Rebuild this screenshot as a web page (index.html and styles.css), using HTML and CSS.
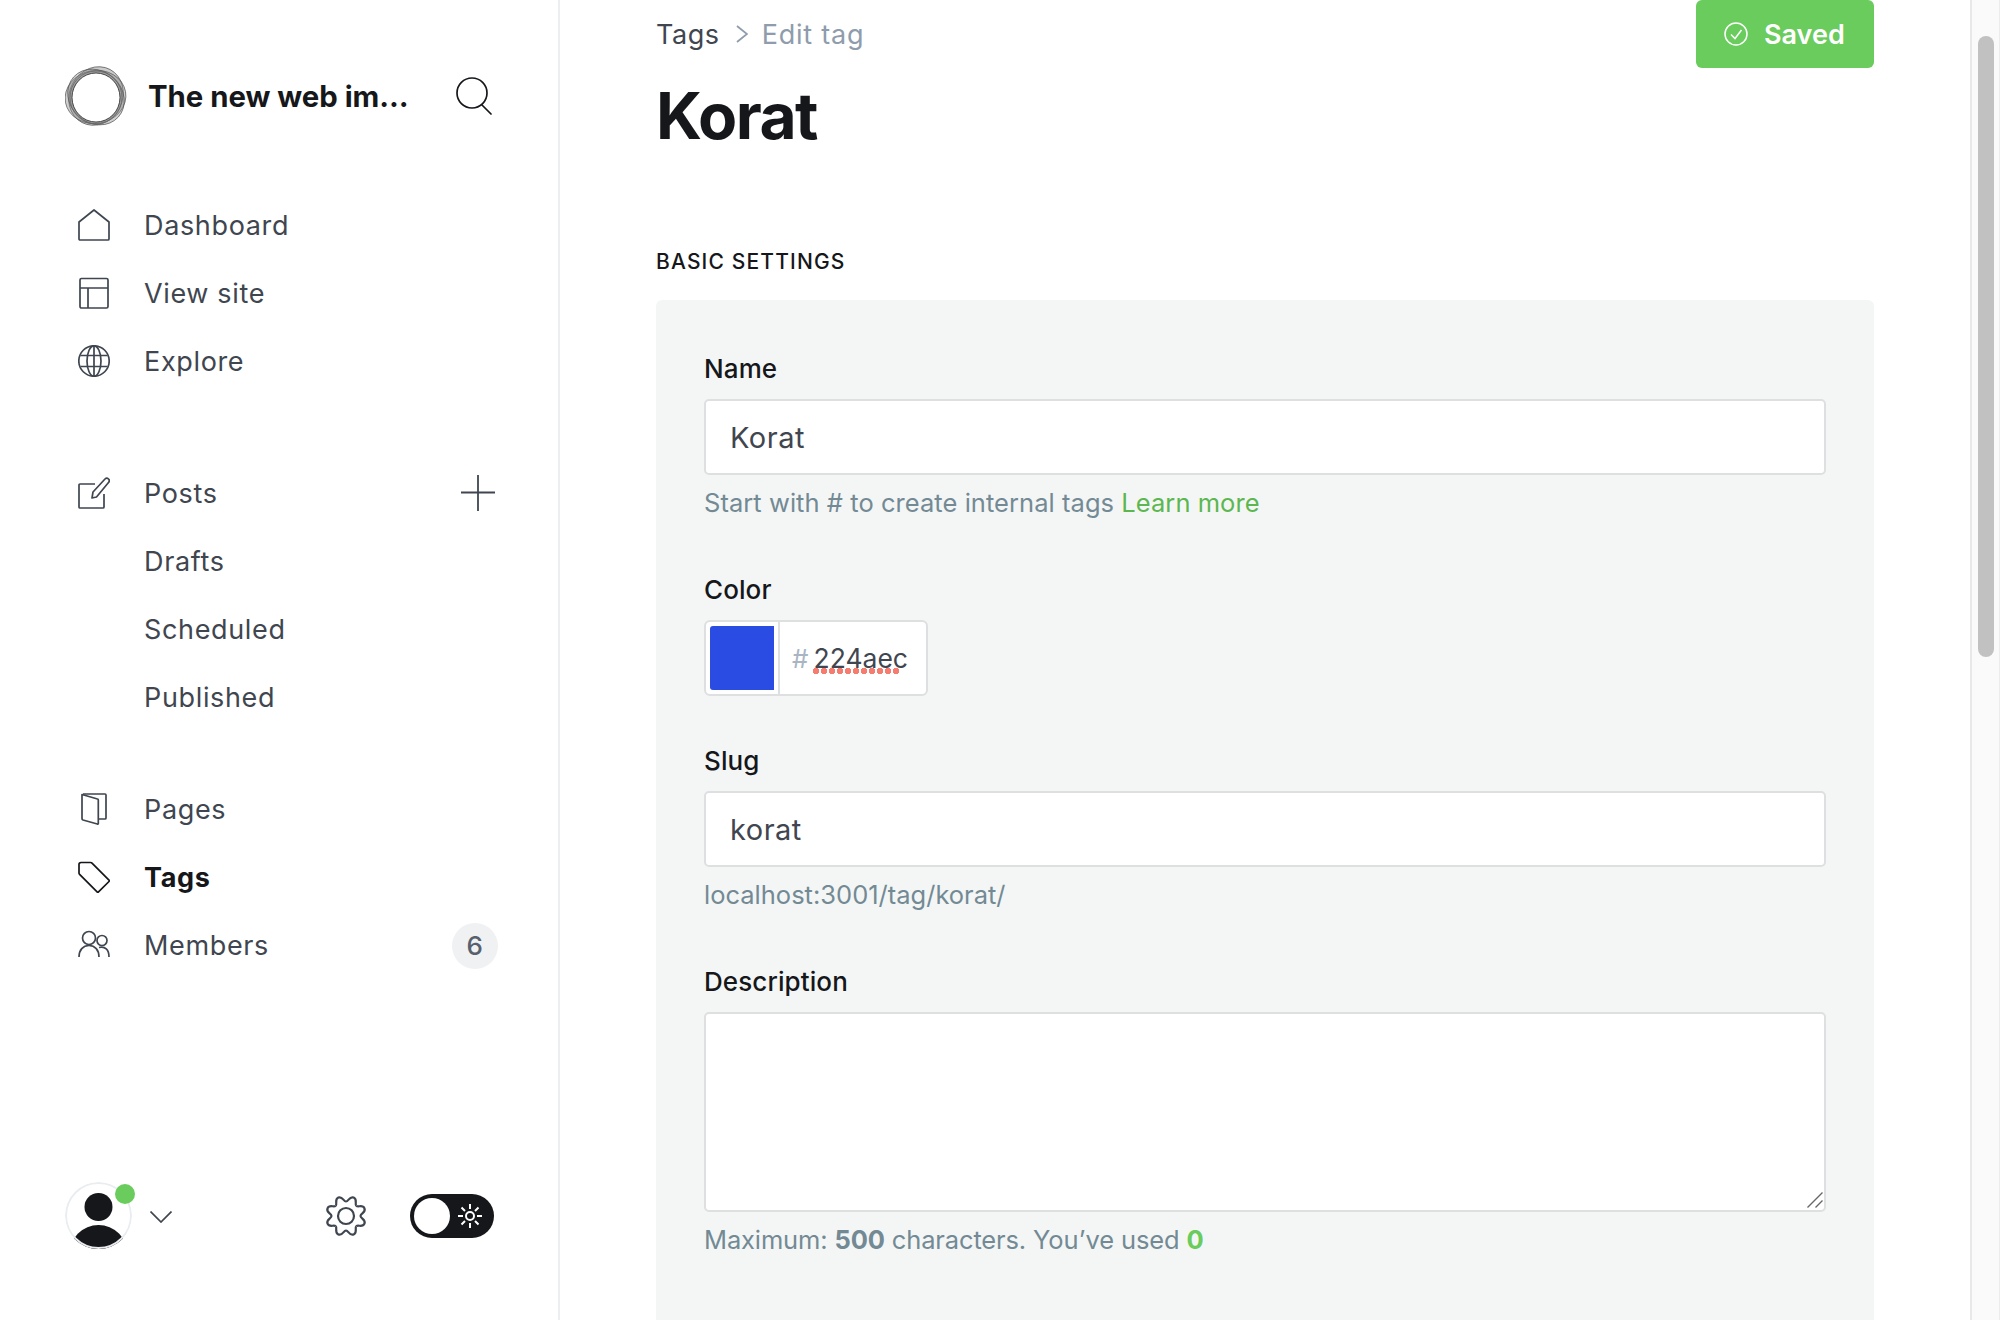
FILE: index.html
```html
<!DOCTYPE html>
<html lang="en">

<head>
  <meta charset="UTF-8">
  <title>Edit tag</title>
  <link rel="stylesheet" href="styles.css">
</head>

<body>
  <aside class="sidebar">
    <div class="brand">
      <svg class="logo" viewBox="0 0 62 64" stroke="#555" stroke-width=".7">
        <ellipse cx="31" cy="32" rx="30" ry="26.500" transform="rotate(-62 31 32)" fill="#aaa" fill-opacity=".6"/>
        <ellipse cx="30.500" cy="33" rx="30.500" ry="26.500" transform="rotate(-10 30.500 33)" fill="#888" fill-opacity=".4"/>
        <ellipse cx="31" cy="33" rx="30" ry="26" transform="rotate(42 31 33)" fill="#888" fill-opacity=".4"/>
        <ellipse cx="31" cy="33.500" rx="26" ry="26.500" fill="none" stroke="#666" stroke-width=".8"/>
        <ellipse cx="31" cy="33.500" rx="24" ry="24.500" fill="#fff" stroke="#333" stroke-width=".9"/>
      </svg>
      <span class="brand-title">The new web im…</span>
      <svg class="search" viewBox="0 0 36 38" fill="none" stroke="#15171a" stroke-width="1.7" stroke-linecap="round">
        <circle cx="16" cy="16" r="15"/>
        <path d="M26 28l9 9"/>
      </svg>
    </div>

    <nav class="nav-group">
      <a class="nav-item">
        <svg class="nav-icon" viewBox="0 0 32 32"><path d="M1 13L16 1l15 12v17a1 1 0 0 1-1 1H2a1 1 0 0 1-1-1z"/></svg>
        Dashboard
      </a>
      <a class="nav-item">
        <svg class="nav-icon" viewBox="0 0 32 32"><rect x="2" y="1.500" width="28" height="29.500" rx="1.500"/><path d="M2 11h28M10 11v20"/></svg>
        View site
      </a>
      <a class="nav-item">
        <svg class="nav-icon" viewBox="0 0 32 32"><circle cx="16" cy="16" r="15.200"/><ellipse cx="16" cy="16" rx="7" ry="15.200"/><path d="M16 1v30M2.500 10.500h27M2.500 21.500h27"/></svg>
        Explore
      </a>
    </nav>

    <nav class="nav-group posts-group">
      <a class="nav-item">
        <svg class="nav-icon" viewBox="0 0 32 32"><path d="M17 7H2a1 1 0 0 0-1 1v22a1 1 0 0 0 1 1h23a1 1 0 0 0 1-1V17"/><path d="M14 21l1-6L27 2a2.500 2.500 0 0 1 3.500 0c1 1 1 2.500 0 3.500L18.500 20z"/></svg>
        Posts
        <svg class="plus" viewBox="0 0 34 36"><path d="M0 17.500h34M17 0v36"/></svg>
      </a>
      <a class="nav-item sub">Drafts</a>
      <a class="nav-item sub">Scheduled</a>
      <a class="nav-item sub">Published</a>
    </nav>

    <nav class="nav-group">
      <a class="nav-item">
        <svg class="nav-icon" viewBox="0 0 32 32"><path d="M5 1h22a1 1 0 0 1 1 1v23a1 1 0 0 1-1 1h-6"/><path d="M4 1.500l15.500 4.500a1 1 0 0 1 .8 1v23.500a.7.7 0 0 1-1 .5L5 27a1.500 1.500 0 0 1-1-1.500z"/></svg>
        Pages
      </a>
      <a class="nav-item active">
        <svg class="nav-icon" viewBox="0 0 32 32"><path d="M3 1.500h9.500a2 2 0 0 1 1.500.6l17 17a1 1 0 0 1 0 1.400L20.500 30.800a1 1 0 0 1-1.400 0L1.600 13.300a2 2 0 0 1-.6-1.500V3.500a2 2 0 0 1 2-2z"/></svg>
        Tags
      </a>
      <a class="nav-item">
        <svg class="nav-icon" viewBox="0 0 32 32"><circle cx="11" cy="9" r="6.500"/><path d="M1 28c0-7 4-11.500 10-11.500S21 21 21 28"/><circle cx="24" cy="11.500" r="5"/><path d="M21 18.500c6-1.500 10 2 10 9.500"/></svg>
        Members
        <span class="badge">6</span>
      </a>
    </nav>

    <div class="sidebar-foot">
      <div class="avatar">
        <svg viewBox="0 0 67 67">
          <circle cx="33.500" cy="25" r="14"/>
          <circle cx="33.500" cy="72" r="29"/>
          <circle class="avatar-ring" cx="33.500" cy="33.500" r="32.500"/>
        </svg>
        <span class="status-dot"></span>
      </div>
      <svg class="chevron" viewBox="0 0 22 12"><path d="M.5 .5L11 11 21.500 .5"/></svg>
      <svg class="gear" viewBox="-21 -21 42 42">
        <circle r="8"/>
        <g>
          <path transform="rotate(22.500)" d="M-5.550-13.400C-3.240-14.360-4.500-20 0-20S3.240-14.360 5.550-13.400"/>
          <path transform="rotate(67.500)" d="M-5.550-13.400C-3.240-14.360-4.500-20 0-20S3.240-14.360 5.550-13.400"/>
          <path transform="rotate(112.500)" d="M-5.550-13.400C-3.240-14.360-4.500-20 0-20S3.240-14.360 5.550-13.400"/>
          <path transform="rotate(157.500)" d="M-5.550-13.400C-3.240-14.360-4.500-20 0-20S3.240-14.360 5.550-13.400"/>
          <path transform="rotate(202.500)" d="M-5.550-13.400C-3.240-14.360-4.500-20 0-20S3.240-14.360 5.550-13.400"/>
          <path transform="rotate(247.500)" d="M-5.550-13.400C-3.240-14.360-4.500-20 0-20S3.240-14.360 5.550-13.400"/>
          <path transform="rotate(292.500)" d="M-5.550-13.400C-3.240-14.360-4.500-20 0-20S3.240-14.360 5.550-13.400"/>
          <path transform="rotate(337.500)" d="M-5.550-13.400C-3.240-14.360-4.500-20 0-20S3.240-14.360 5.550-13.400"/>
        </g>
      </svg>
      <div class="theme-toggle">
        <span class="knob"></span>
        <svg class="sun" viewBox="0 0 24 24"><circle cx="12" cy="12" r="4"/><path d="M12 0v5M12 19v5M0 12h5M19 12h5M3.500 3.500L7 7M17 17l3.500 3.500M20.500 3.500L17 7M7 17l-3.500 3.500"/></svg>
      </div>
    </div>
  </aside>

  <main class="content">
    <header class="page-head">
      <div>
        <div class="breadcrumb">
          <span>Tags</span>
          <svg viewBox="0 0 12 18"><path d="M1 1l10 8-10 8"/></svg>
          <span class="crumb-current">Edit tag</span>
        </div>
        <h1>Korat</h1>
      </div>
      <button class="saved-btn">
        <svg viewBox="0 0 24 24"><circle cx="12" cy="12" r="11"/><path d="M7 12.500l4 4 6.500-8.500"/></svg>
        Saved
      </button>
    </header>

    <h2 class="section-title">BASIC SETTINGS</h2>

    <form class="panel">
      <label class="field-label">Name</label>
      <input class="text-input" type="text" value="Korat" spellcheck="false">
      <p class="hint hint-tags">Start with # to create internal tags <a>Learn more</a></p>

      <label class="field-label color-label">Color</label>
      <div class="color-field">
        <span class="swatch"></span>
        <span class="hex"><span class="hash">#</span><span class="misspelt">224aec</span></span>
      </div>

      <label class="field-label slug-label">Slug</label>
      <input class="text-input" type="text" value="korat" spellcheck="false">
      <p class="hint">localhost:3001/tag/korat/</p>

      <label class="field-label desc-label">Description</label>
      <div class="textarea-wrap">
        <textarea class="text-area" spellcheck="false"></textarea>
        <svg class="grip" viewBox="0 0 16 16"><path d="M.5 15.500l15-15M8.500 15.500l7-7"/></svg>
      </div>
      <p class="hint hint-max">Maximum: <b>500</b> characters. You’ve used <b class="used">0</b></p>
    </form>
  </main>

  <div class="scrollbar"><div class="thumb"></div></div>
</body>

</html>
```

FILE: styles.css
```css
* {
  box-sizing: border-box;
}

body {
  margin: 0;
  height: 1320px;
  display: flex;
  overflow: hidden;
  font-family: Inter, sans-serif;
  background-color: #fff;
  color: #15171a;
}

/* sidebar */
.sidebar {
  width: 560px;
  flex: none;
  display: flex;
  flex-direction: column;
  border-right: 2px solid #eceef0;
  padding: 64px 64px 0 65px;
}

.brand {
  display: flex;
  align-items: center;
  height: 64px;
  margin-bottom: 63px;
}

.logo {
  width: 62px;
  height: 64px;
  flex: none;
}

.brand-title {
  margin-left: 21px;
  font-size: 29.300px;
  font-weight: 700;
  white-space: nowrap;
}

.search {
  width: 36px;
  height: 38px;
  margin-left: auto;
  margin-right: 2px;
  flex: none;
}

.nav-group {
  display: flex;
  flex-direction: column;
  margin-bottom: 64px;
}

.posts-group {
  margin-bottom: 44px;
}

.nav-item {
  display: flex;
  align-items: center;
  height: 68px;
  padding-left: 13px;
  font-size: 27px;
  letter-spacing: .65px;
  color: #3f4650;
}

.nav-item.sub {
  padding-left: 79px;
}

.nav-item.active {
  font-weight: 700;
  color: #15171a;
}

.nav-icon {
  width: 32px;
  height: 32px;
  margin-right: 34px;
  flex: none;
  fill: none;
  stroke: #3f4650;
  stroke-width: 1.7;
  stroke-linejoin: round;
}

.nav-item.active .nav-icon {
  stroke: #15171a;
}

.plus {
  width: 34px;
  height: 36px;
  margin-left: auto;
  margin-right: -1px;
  fill: none;
  stroke: #3f4650;
  stroke-width: 1.8;
}

.badge {
  width: 46px;
  height: 46px;
  margin-left: auto;
  margin-right: -4px;
  margin-top: 1px;
  display: flex;
  align-items: center;
  justify-content: center;
  border-radius: 50%;
  background-color: #eff1f3;
  color: #56616d;
  font-size: 26px;
  font-weight: 500;
}

.sidebar-foot {
  display: flex;
  align-items: center;
  margin-top: auto;
  margin-bottom: 71px;
  height: 67px;
}

.avatar {
  position: relative;
  width: 67px;
  height: 67px;
  flex: none;
  border-radius: 50%;
}

.avatar svg {
  width: 67px;
  height: 67px;
  display: block;
  border-radius: 50%;
  fill: #15171a;
}

.avatar-ring {
  fill: none;
  stroke: #eaedf0;
  stroke-width: 2;
}

.status-dot {
  position: absolute;
  top: 2px;
  right: -3px;
  width: 20px;
  height: 20px;
  border-radius: 50%;
  background-color: #69cc5c;
}

.chevron {
  width: 22px;
  height: 12px;
  margin-left: 18px;
  margin-top: 2px;
  fill: none;
  stroke: #3f4650;
  stroke-width: 1.7;
}

.gear {
  width: 42px;
  height: 42px;
  margin-left: auto;
  fill: none;
  stroke: #3f4650;
  stroke-width: 2.2;
}

.theme-toggle {
  width: 84px;
  height: 44px;
  margin-left: 43px;
  padding: 4px;
  display: flex;
  align-items: center;
  justify-content: space-between;
  border-radius: 22px;
  background-color: #15171a;
}

.knob {
  width: 36px;
  height: 36px;
  border-radius: 50%;
  background-color: #fff;
}

.sun {
  width: 24px;
  height: 24px;
  margin-right: 8px;
  fill: none;
  stroke: #fff;
  stroke-width: 2;
}

/* main column */
.content {
  flex: 1;
  min-width: 0;
  padding: 0 96px;
}

.page-head {
  display: flex;
  justify-content: space-between;
  align-items: flex-start;
  height: 240px;
}

.breadcrumb {
  display: flex;
  align-items: center;
  gap: 16px;
  height: 68px;
  font-size: 27px;
  letter-spacing: .55px;
  color: #3f4650;
}

.breadcrumb svg {
  width: 12px;
  height: 18px;
  fill: none;
  stroke: #8e9cac;
  stroke-width: 1.8;
}

.crumb-current {
  margin-left: -2px;
  letter-spacing: .8px;
  color: #8e9cac;
}

h1 {
  margin: 12px 0 0;
  font-size: 64px;
  line-height: 72px;
  font-weight: 700;
  letter-spacing: -1.5px;
}

.saved-btn {
  display: flex;
  align-items: center;
  gap: 16px;
  width: 178px;
  height: 68px;
  padding: 0 0 0 28px;
  border: none;
  border-radius: 6px;
  background-color: #69cc5c;
  color: #fff;
  font-family: inherit;
  font-size: 27px;
  font-weight: 600;
}

.saved-btn svg {
  width: 24px;
  height: 24px;
  fill: none;
  stroke: #fff;
  stroke-width: 1.5;
}

.section-title {
  margin: 0;
  height: 60px;
  padding-top: 6px;
  font-size: 21px;
  line-height: 32px;
  font-weight: 500;
  letter-spacing: 1.15px;
}

.panel {
  height: 1020px;
  padding: 48px 48px 0;
  border-radius: 6px 6px 0 0;
  background-color: #f4f6f6;
}

.field-label {
  display: block;
  height: 34px;
  margin-top: 4px;
  margin-bottom: 13px;
  font-size: 26px;
  line-height: 34px;
  font-weight: 500;
  letter-spacing: .1px;
}

.color-label {
  margin-top: 53px;
}

.slug-label {
  margin-top: 48px;
}

.desc-label {
  margin-top: 53px;
}

.text-input {
  display: block;
  width: 100%;
  height: 76px;
  padding: 0 24px;
  border: 2px solid #dddfe0;
  border-radius: 5px;
  background-color: #fff;
  color: #3f4650;
  font-family: inherit;
  font-size: 29px;
  letter-spacing: .5px;
}

.hint {
  margin: 11px 0 0;
  font-size: 25.500px;
  line-height: 34px;
  color: #738a94;
}

.hint-tags {
  letter-spacing: .05px;
}

.hint-max {
  letter-spacing: -.14px;
}

.hint a {
  color: #5cb74f;
}

.hint b {
  font-weight: 700;
}

.hint .used {
  color: #69cc5c;
}

.color-field {
  display: flex;
  width: 224px;
  height: 76px;
  border: 2px solid #dddfe0;
  border-radius: 6px;
  background-color: #fff;
}

.swatch {
  width: 64px;
  margin: 4px 0 4px 4px;
  border-radius: 3px 0 0 3px;
  background-color: #2a4ce2;
  flex: none;
}

.hex {
  flex: 1;
  display: flex;
  align-items: center;
  padding: 0 0 0 12px;
  margin-left: 4px;
  border-left: 2px solid #dddfe0;
  font-size: 26.500px;
  color: #3f4650;
}

.hash {
  margin-right: 5px;
  font-size: 26px;
  color: #a9b5c2;
}

.misspelt {
  position: relative;
}

.misspelt::after {
  content: "";
  position: absolute;
  left: -1px;
  bottom: 0;
  width: 88px;
  height: 6px;
  background-image: radial-gradient(circle, #f47c70 3px, transparent 3.4px);
  background-size: 8px 6px;
  background-repeat: repeat-x;
}

.textarea-wrap {
  position: relative;
}

.text-area {
  display: block;
  width: 100%;
  height: 200px;
  border: 2px solid #dddfe0;
  border-radius: 5px;
  background-color: #fff;
  resize: none;
}

.grip {
  position: absolute;
  right: 3px;
  bottom: 4px;
  width: 16px;
  height: 16px;
  fill: none;
  stroke: #666;
  stroke-width: 1.4;
}

/* scrollbar column */
.scrollbar {
  width: 30px;
  flex: none;
  border-left: 2px solid #e8e8e8;
  border-right: 1px solid #ececec;
  background-color: #fafafa;
  padding: 36px 0 0 6px;
}

.thumb {
  width: 16px;
  height: 621px;
  border-radius: 8px;
  background-color: #c1c1c1;
}
```
